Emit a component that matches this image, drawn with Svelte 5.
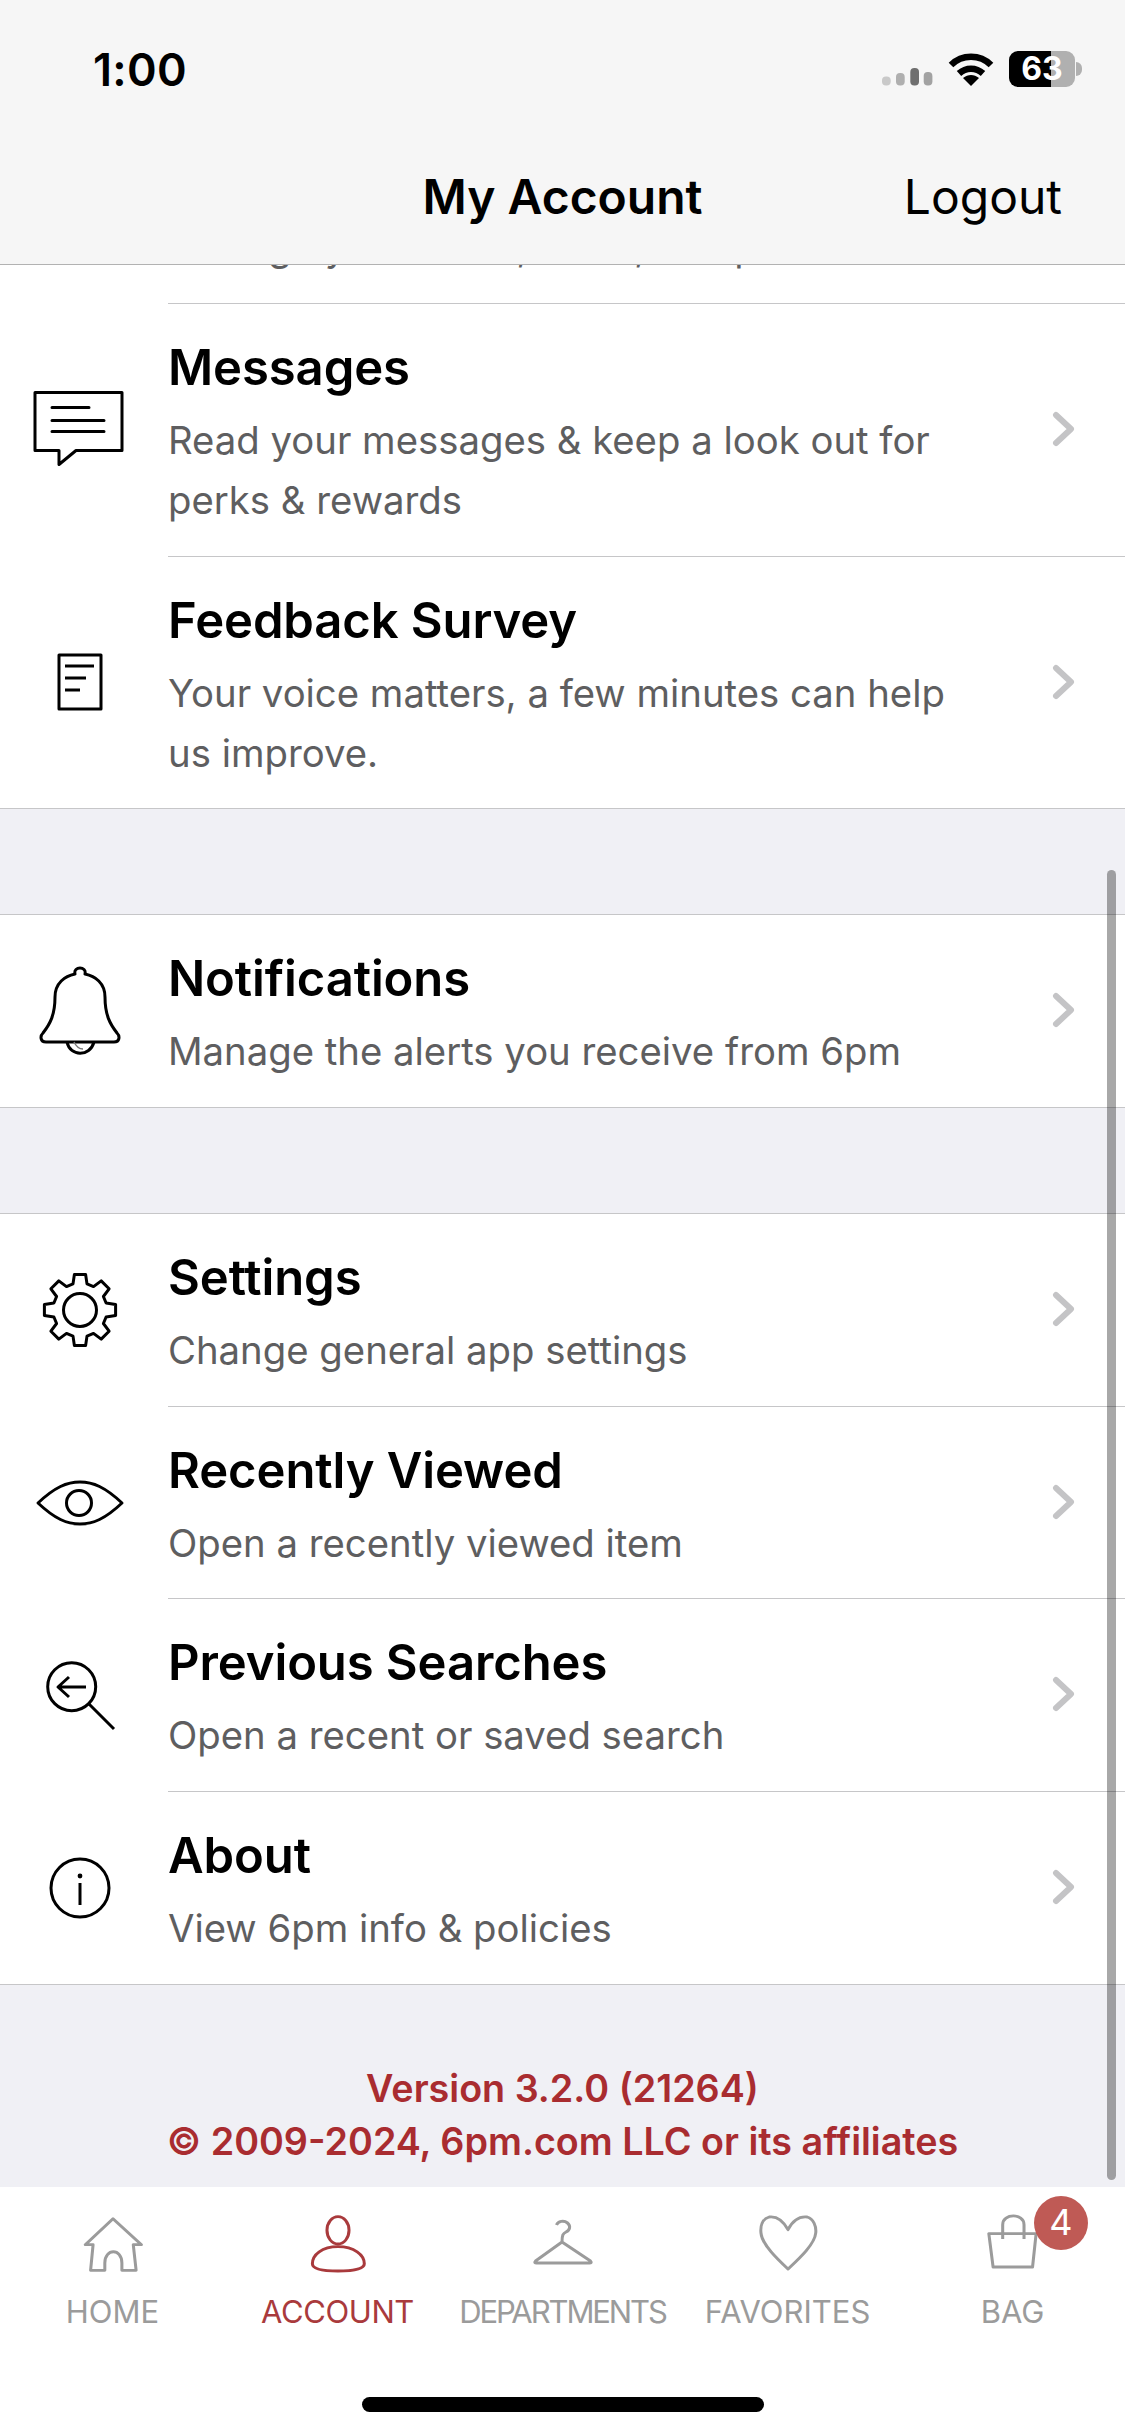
<script>
  const groups = [
    [
      { icon: "messages", title: "Messages", sub: "Read your messages & keep a look out for perks & rewards" },
      { icon: "survey", title: "Feedback Survey", sub: "Your voice matters, a few minutes can help us improve." },
    ],
    [{ icon: "bell", title: "Notifications", sub: "Manage the alerts you receive from 6pm" }],
    [
      { icon: "gear", title: "Settings", sub: "Change general app settings" },
      { icon: "eye", title: "Recently Viewed", sub: "Open a recently viewed item" },
      { icon: "search", title: "Previous Searches", sub: "Open a recent or saved search" },
      { icon: "info", title: "About", sub: "View 6pm info & policies" },
    ],
  ];

  const tabs = ["HOME", "ACCOUNT", "DEPARTMENTS", "FAVORITES", "BAG"];

  // 8 tooth gear outline, centred on 40,40
  const gearPoints = [];
  for (let k = 0; k < 8; k++) {
    const a = k * 45;
    for (const [r, d] of [[27, -15], [36, -9], [36, 9], [27, 15]]) {
      const t = ((a + d - 90) * Math.PI) / 180;
      gearPoints.push((40 + r * Math.cos(t)).toFixed(1) + "," + (40 + r * Math.sin(t)).toFixed(1));
    }
  }
  const gear = gearPoints.join(" ");
</script>

{#snippet rowIcon(name)}
  {#if name === "messages"}
    <svg width="100" height="90" viewBox="1 -1.5 100 90">
      <path d="M6 6H93V64H47L30 78V64H6Z" />
      <path d="M23 21H60M23 34H75M23 45H75" stroke-linecap="round" />
    </svg>
  {:else if name === "survey"}
    <svg width="50" height="62" viewBox="0 0 50 62">
      <path d="M4 4H46V58H4Z" />
      <path d="M10 15H39M10 27H31M10 39H25" />
    </svg>
  {:else if name === "bell"}
    <svg width="90" height="92" viewBox="0 0 90 92">
      <path d="M11 77C5 77 5 71 8 68C15 59 20 50 20 32C20 18 30 11 40 9C38 1 52 1 50 9C60 11 70 18 70 32C70 50 75 59 82 68C85 71 85 77 79 77Z" />
      <path d="M32 77C35 92 55 92 59 77" />
      <path class="thin" d="M39 77C41 81 44 84 48 84" />
    </svg>
  {:else if name === "gear"}
    <svg width="80" height="80" viewBox="0 0 80 80">
      <polygon points={gear} />
      <circle cx="40" cy="40" r="16.5" />
    </svg>
  {:else if name === "eye"}
    <svg width="90" height="48" viewBox="0 0 90 48">
      <path d="M3 24C20 8 32 3 45 3C58 3 70 8 87 24C70 40 58 45 45 45C32 45 20 40 3 24Z" />
      <circle cx="44" cy="24" r="12.5" />
    </svg>
  {:else if name === "search"}
    <svg width="72" height="72" viewBox="0 0 72 72">
      <circle cx="27.7" cy="26.7" r="24" />
      <path d="M45 44L70 69M42 27H14M25 17L14 27L25 37" />
    </svg>
  {:else if name === "info"}
    <svg width="64" height="64" viewBox="0 0 64 64">
      <circle cx="32" cy="32" r="29" />
      <circle class="dot" cx="32" cy="20" r="2.4" />
      <path d="M32 27V49" />
    </svg>
  {/if}
{/snippet}

{#snippet tabIcon(name)}
  {#if name === "HOME"}
    <svg class="tab-icon" viewBox="228 100 180 180" preserveAspectRatio="none">
      <path d="M318 117L240 195H262L255 272H295V250C295 205 343 205 343 250V272H383L375 195H398Z" />
    </svg>
  {:else if name === "ACCOUNT"}
    <svg class="tab-icon" viewBox="850 100 180 180" preserveAspectRatio="none">
      <ellipse cx="940" cy="152" rx="31" ry="41" />
      <path d="M940 201C895 201 868 225 868 252C868 268 900 274 940 274C980 274 1014 268 1014 252C1014 225 985 201 940 201Z" />
    </svg>
  {:else if name === "DEPARTMENTS"}
    <svg class="tab-icon" viewBox="0 0 64 60" preserveAspectRatio="none">
      <path d="M25.5 12C27 8 33 7 36.5 10C40 13 39 17 35 19C32 20.5 31 22 31 29M31 29L4.5 48C3 49.5 4 50 5.5 50H58.5C60 50 61 49.5 59.5 48Z" />
    </svg>
  {:else if name === "FAVORITES"}
    <svg class="tab-icon" viewBox="538 100 180 180" preserveAspectRatio="none">
      <path d="M628 150C610 115 590 110 575 112C555 118 550 140 552 160C555 195 600 240 628 268C656 240 703 195 706 160C708 140 700 118 682 112C665 110 645 115 628 150Z" />
    </svg>
  {:else}
    <svg class="tab-icon" viewBox="1163 100 180 180" preserveAspectRatio="none">
      <path d="M1185 162H1318L1308 262H1197Z" />
      <path d="M1224 178V135C1224 100 1284 100 1284 135V178" />
    </svg>
  {/if}
{/snippet}

<div class="page">
  <header class="top">
    <div class="status">
      <span class="time">1:00</span>
      <div class="indicators">
        <svg class="signal" width="51" height="18" viewBox="0 0 51 18">
          <rect x="0" y="8.5" width="8.7" height="9" rx="4" fill="#c9c9c9" />
          <rect x="14" y="5" width="8.7" height="12.5" rx="4" fill="#afafaf" />
          <rect x="28.3" y="0" width="8.7" height="17.5" rx="4" fill="#6f6f6f" />
          <rect x="41.7" y="4" width="8.7" height="13.5" rx="4" fill="#a2a2a2" />
        </svg>
        <svg width="46" height="33" viewBox="0 0 46 33">
          <path class="wifi" d="M3 12C14 1 32 1 43 12M11 20.5C18 14 28 14 35 20.5" />
          <path d="M23 33L15 25C20 21 26 21 31 25Z" />
        </svg>
        <div class="battery">63</div>
      </div>
    </div>
    <div class="nav">
      <span></span>
      <h1>My Account</h1>
      <span class="logout">Logout</span>
    </div>
  </header>

  <main class="list">
    <div class="clipped">
      <div class="clipped-body">
        <p class="sub">Manage your name, email, and password</p>
      </div>
    </div>
    {#each groups as group, g}
      <section class="group" class:first={g === 0}>
        {#each group as row}
          <div class="row">
            <div class="icon">{@render rowIcon(row.icon)}</div>
            <div class="body">
              <div class="text">
                <h2>{row.title}</h2>
                <p class="sub">{row.sub}</p>
              </div>
              <svg class="chevron" width="24" height="40" viewBox="0 0 24 40">
                <path d="M5 6L20 20L5 34" />
              </svg>
            </div>
          </div>
        {/each}
      </section>
    {/each}
    <footer class="legal">
      <div>Version 3.2.0 (21264)</div>
      <div>© 2009-2024, 6pm.com LLC or its affiliates</div>
    </footer>
  </main>

  <nav class="tabs">
    {#each tabs as tab}
      <div class="tab" class:active={tab === "ACCOUNT"}>
        {@render tabIcon(tab)}
        <span class="label">{tab}</span>
        {#if tab === "BAG"}
          <span class="badge">4</span>
        {/if}
      </div>
    {/each}
  </nav>
  <div class="home-bar"></div>
  <div class="scrollbar"></div>
</div>

<style>
  :global(body) {
    margin: 0;
    background: #fff;
  }

  .page {
    position: relative;
    display: flex;
    flex-direction: column;
    height: 2436px;
    overflow: hidden;
    font-family: Inter, "Liberation Sans", sans-serif;
    color: #000;
  }

  .top {
    background: #f6f6f6;
    border-bottom: 1px solid #b2b2b2;
  }

  .status {
    display: flex;
    justify-content: space-between;
    align-items: center;
    height: 132px;
    padding: 6px 50px 0 93px;
    box-sizing: border-box;
  }

  .time {
    font-size: 45px;
    font-weight: 600;
    letter-spacing: 0.3px;
  }

  .indicators {
    display: flex;
    align-items: center;
    gap: 15px;
  }

  .signal {
    margin-top: 16px;
  }

  .wifi {
    fill: none;
    stroke: #000;
    stroke-width: 6.5;
  }

  .battery {
    position: relative;
    width: 66px;
    height: 36px;
    border-radius: 9px;
    background: linear-gradient(90deg, #000 64%, #b0b0b0 64%);
    color: #fff;
    font-size: 32px;
    font-weight: 700;
    line-height: 36px;
    text-align: center;
  }

  .battery::after {
    content: "";
    position: absolute;
    left: 67px;
    top: 11px;
    width: 6px;
    height: 14px;
    border-radius: 0 7px 7px 0;
    background: #b0b0b0;
  }

  .nav {
    display: grid;
    grid-template-columns: 1fr auto 1fr;
    align-items: center;
    height: 132px;
    padding-bottom: 3px;
    box-sizing: border-box;
  }

  .nav h1 {
    margin: 0;
    font-size: 48px;
    font-weight: 600;
  }

  .logout {
    justify-self: end;
    margin-right: 63px;
    font-size: 48px;
  }

  .list {
    flex: 1;
    background: #f0f0f5;
    min-height: 0;
  }

  .clipped {
    background: #fff;
    padding-left: 168px;
  }

  .clipped-body {
    display: flex;
    align-items: flex-end;
    height: 12px;
    padding-bottom: 26px;
    overflow: hidden;
    border-bottom: 1px solid #c6c6c8;
  }

  .clipped .sub {
    flex: none;
  }

  .group {
    background: #fff;
    margin-bottom: 105px;
    border-top: 1px solid #c6c6c8;
    border-bottom: 1px solid #c6c6c8;
  }

  .group.first {
    border-top: 0;
  }

  .group:last-of-type {
    margin-bottom: 0;
  }

  .row {
    display: flex;
  }

  .icon {
    flex: none;
    display: flex;
    justify-content: center;
    align-items: center;
    width: 159px;
    margin-right: 9px;
  }

  .icon svg {
    fill: none;
    stroke: #000;
    stroke-width: 3;
    stroke-linejoin: round;
  }

  .icon .thin {
    stroke: #777;
    stroke-width: 1.5;
  }

  .icon .dot {
    fill: #000;
    stroke: none;
  }

  .body {
    flex: 1;
    display: flex;
    align-items: center;
    justify-content: space-between;
    padding: 39px 50px 25.67px 0;
    border-bottom: 1px solid #c6c6c8;
  }

  .row:last-child .body {
    border-bottom: 0;
  }

  .text {
    width: 800px;
  }

  h2 {
    margin: 0 0 17px;
    font-size: 49px;
    line-height: 50px;
    font-weight: 600;
    letter-spacing: -0.1px;
  }

  .sub {
    margin: 0;
    font-size: 38.3px;
    line-height: 60px;
    color: #5e5e60;
  }

  .chevron {
    flex: none;
    margin-top: -15px;
    fill: none;
    stroke: #c4c4c6;
    stroke-width: 6;
    stroke-linecap: round;
    stroke-linejoin: round;
  }

  .legal {
    padding: 77px 0 0;
    font-size: 37.7px;
    font-weight: 600;
    line-height: 53px;
    text-align: center;
    color: #a92c30;
  }

  .tabs {
    display: grid;
    grid-template-columns: repeat(5, 225px);
    height: 249px;
    box-sizing: border-box;
    padding-top: 26px;
    background: #fff;
  }

  .tab {
    position: relative;
    display: flex;
    flex-direction: column;
    align-items: center;
    color: #9b9b9b;
  }

  .tab.active {
    color: #a93a3c;
  }

  .tab-icon {
    width: 64px;
    height: 60px;
    fill: none;
    stroke: currentColor;
    stroke-width: 8.5;
    stroke-linejoin: round;
  }

  .tab:nth-child(3) .tab-icon {
    stroke-width: 3;
  }

  .label {
    margin-top: 20px;
    font-size: 31px;
    line-height: 38px;
    white-space: nowrap;
  }

  .tab.active .label {
    letter-spacing: -0.4px;
  }

  .tab:nth-child(3) .label {
    letter-spacing: -2.1px;
  }

  .badge {
    position: absolute;
    top: -17px;
    left: 134px;
    width: 54px;
    height: 54px;
    border-radius: 50%;
    background: #bf5a55;
    color: #fff;
    font-size: 36px;
    line-height: 52px;
    text-align: center;
  }

  .home-bar {
    position: absolute;
    left: 362px;
    top: 2397px;
    width: 402px;
    height: 15px;
    border-radius: 8px;
    background: #000;
  }

  .scrollbar {
    position: absolute;
    left: 1107px;
    top: 870px;
    width: 9px;
    height: 1310px;
    border-radius: 5px;
    background: rgba(0, 0, 0, 0.34);
  }
</style>
